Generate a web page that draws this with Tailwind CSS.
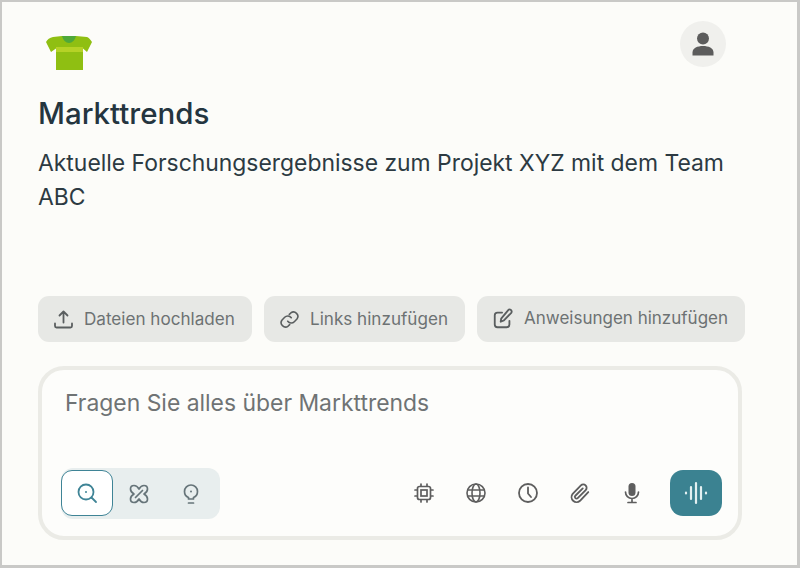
<!DOCTYPE html>
<html lang="de">
<head>
  <meta charset="UTF-8">
  <title>Markttrends</title>
  <script src="https://cdn.jsdelivr.net/npm/@tailwindcss/browser@4"></script>
</head>
<body class="m-0 bg-[#c9c9c7]">
  <div class="w-[800px] h-[568px] overflow-hidden border-t-[2px] border-l-[2px] border-r-[3px] border-b-[3px] border-[#c9c9c7] bg-[#fcfcf9] font-['Inter',sans-serif] pl-[36px] pr-[52px] flex flex-col">
    <!-- top row -->
    <div class="h-[61px] flex justify-between pt-[18px] shrink-0">
      <svg class="ml-[8px] mt-[16px] w-[46px] h-[34px]" viewBox="46 36 46 34">
        <path d="M53 37 L62 36 H76 L87 37 Q89 37.500 92 42 L87 52 L83 48.500 V70 H56 V48.500 L51 52 L46 42 Q48 38 53 37 Z" fill="#8fbf12"/>
        <path d="M56 47 H83 V52 H56 Z" fill="#b5d226"/>
        <path d="M62 36 H76 Q74 43 69 43 Q64 43 62 36 Z" fill="#4ea83a"/>
      </svg>
      <div class="w-[46px] h-[46px] rounded-full bg-[#f0f0ed] flex items-center justify-center mr-[19px] mt-[1px]">
        <svg class="w-[22px] h-[24px]" viewBox="0 0 22 24" fill="#5c5c5c">
          <circle cx="11" cy="6.500" r="6"/>
          <path d="M0.500 23.500 V20.500 C0.500 16 5.500 14 11 14 C16.500 14 21.500 16 21.500 20.500 V23.500 Z"/>
        </svg>
      </div>
    </div>

    <h1 class="mt-[33px] text-[29.500px] leading-[34px] font-medium text-[#24353f] m-0">Markttrends</h1>
    <p class="mt-[16px] w-[700px] text-[22.900px] leading-[34px] text-[#2c3a42]">Aktuelle Forschungsergebnisse zum Projekt XYZ mit dem Team ABC</p>

    <!-- action buttons -->
    <div class="mt-[82px] flex gap-[12px] shrink-0">
      <button class="h-[46px] w-[214px] rounded-[11px] bg-[#e7e8e5] flex items-center pl-[15px] gap-[10px] text-[17.100px] text-[#6d7273]">
        <svg class="w-[21px] h-[21px] shrink-0" viewBox="0 0 21 21" fill="none" stroke="#5a5e5f" stroke-width="1.800" stroke-linecap="round" stroke-linejoin="round"><path d="M10.500 13.500 V2.500 M6.500 6.500 L10.500 2.500 L14.500 6.500 M2 14.500 V17 Q2 18.500 3.500 18.500 H17.500 Q19 18.500 19 17 V14.500"/></svg>
        Dateien hochladen
      </button>
      <button class="h-[46px] w-[201px] rounded-[11px] bg-[#e7e8e5] flex items-center pl-[15px] gap-[10px] text-[17.100px] text-[#6d7273]">
        <svg class="w-[21px] h-[21px] shrink-0" viewBox="0 0 24 24" fill="none" stroke="#5a5e5f" stroke-width="1.800" stroke-linecap="round" stroke-linejoin="round"><path d="M10 14 a5 5 0 0 0 7.500 .5 l3 -3 a5 5 0 0 0 -7 -7 l-1.700 1.700"/><path d="M14 10 a5 5 0 0 0 -7.500 -.5 l-3 3 a5 5 0 0 0 7 7 l1.700 -1.700"/></svg>
        Links hinzufügen
      </button>
      <button class="h-[46px] w-[268px] rounded-[11px] bg-[#e7e8e5] flex items-center pl-[15px] gap-[10px] text-[17px] text-[#6d7273]">
        <svg class="w-[22px] h-[22px] shrink-0" viewBox="0 0 24 24" fill="none" stroke="#5a5e5f" stroke-width="2" stroke-linecap="round" stroke-linejoin="round"><path d="M11 5 H6 a3 3 0 0 0 -3 3 V18 a3 3 0 0 0 3 3 H16 a3 3 0 0 0 3 -3 V14"/><path d="M9.500 15 L10 11.500 L17.500 2.500 a2 2 0 0 1 3.500 2.800 L13 13.500 Z"/></svg>
        Anweisungen hinzufügen
      </button>
    </div>

    <!-- composer -->
    <div class="mt-[24px] w-[704px] h-[174px] shrink-0 rounded-[26px] border-[4px] border-[#ebebe6] bg-[#fdfdfb] pl-[19px] pr-[16px] pt-[18px] flex flex-col justify-between pb-[17px]">
      <div class="pl-[4px] text-[22.900px] leading-[30px] text-[#6f7374]">Fragen Sie alles über Markttrends</div>
      <div class="flex items-center justify-between">
        <div class="w-[159px] h-[51px] rounded-[12px] bg-[#e8eeee] flex items-center">
          <div class="mb-[2px] w-[52px] h-[46px] rounded-[11px] border border-[#3f8496] bg-white flex items-center justify-center">
            <svg class="w-[22px] h-[22px]" viewBox="0 0 22 22" fill="none" stroke="#3f8496" stroke-width="1.800" stroke-linecap="round"><circle cx="10" cy="10" r="7.500"/><circle cx="10" cy="10" r="1" fill="#3f8496" stroke="none"/><path d="M15.500 15.500 L20 20"/></svg>
          </div>
          <div class="w-[52px] flex justify-center">
            <svg class="w-[22px] h-[22px]" viewBox="0 0 22 22" fill="none" stroke="#667479" stroke-width="1.700" stroke-linecap="round" stroke-linejoin="round"><path d="M6 2.500 C9 2.500 11 6 11 6 C11 6 13 2.500 16 2.500 C18.500 2.500 19.500 4.500 19.500 6 C19.500 9 16 11 16 11 C16 11 19.500 13 19.500 16 C19.500 18 18 19.500 16 19.500 C13 19.500 11 16 11 16 C11 16 9 19.500 6 19.500 C4 19.500 2.500 18 2.500 16 C2.500 13 6 11 6 11 C6 11 2.500 9 2.500 6 C2.500 4 4 2.500 6 2.500 Z"/><path d="M7.500 14.500 L14.500 7.500"/></svg>
          </div>
          <div class="w-[52px] flex justify-center">
            <svg class="w-[22px] h-[22px]" viewBox="0 0 22 22" fill="none" stroke="#667479" stroke-width="1.700" stroke-linecap="round" stroke-linejoin="round"><path d="M8.500 16 V14.500 C6 13.500 4.500 11 4.500 8.500 A6.500 6.500 0 0 1 17.500 8.500 C17.500 11 16 13.500 13.500 14.500 V16 Z"/><path d="M8.500 20 H13.500"/><circle cx="11" cy="8.500" r="1" fill="#667479" stroke="none"/></svg>
          </div>
        </div>
        <div class="mb-[2px] flex items-center">
          <div class="w-[52px] flex justify-center">
            <svg class="w-[22px] h-[22px]" viewBox="0 0 22 22" fill="none" stroke="#5e5e5e" stroke-width="1.700" stroke-linecap="round"><rect x="4.500" y="4.500" width="13" height="13" rx="2"/><rect x="8" y="8" width="6" height="6"/><path d="M8 2 V4 M14 2 V4 M8 18 V20 M14 18 V20 M2 8 H4 M2 14 H4 M18 8 H20 M18 14 H20"/></svg>
          </div>
          <div class="w-[52px] flex justify-center">
            <svg class="w-[22px] h-[22px]" viewBox="0 0 22 22" fill="none" stroke="#5e5e5e" stroke-width="1.600"><circle cx="11" cy="11" r="9"/><ellipse cx="11" cy="11" rx="4" ry="9"/><path d="M2.500 8 H19.500 M2.500 14 H19.500"/></svg>
          </div>
          <div class="w-[52px] flex justify-center">
            <svg class="w-[22px] h-[22px]" viewBox="0 0 22 22" fill="none" stroke="#5e5e5e" stroke-width="1.800" stroke-linecap="round" stroke-linejoin="round"><circle cx="11" cy="11" r="9"/><path d="M11 5.500 V11.500 L14 15"/></svg>
          </div>
          <div class="w-[52px] flex justify-center">
            <svg class="w-[22px] h-[22px]" viewBox="0 0 24 24" fill="none" stroke="#5e5e5e" stroke-width="2" stroke-linecap="round" stroke-linejoin="round"><path d="M21 11 L12 20.500 a5.500 5.500 0 0 1 -8 -7.500 L13 3.800 a3.600 3.600 0 0 1 5.200 5 L9.500 17.500 a1.800 1.800 0 0 1 -2.600 -2.500 L15 7"/></svg>
          </div>
          <div class="w-[52px] flex justify-center">
            <svg class="w-[22px] h-[22px]" viewBox="0 0 22 22" fill="none" stroke="#5e5e5e" stroke-width="1.700" stroke-linecap="round"><rect x="7.500" y="1" width="7" height="13" rx="3.500" fill="#5e5e5e" stroke="none"/><path d="M4.500 10 A6.500 6.500 0 0 0 17.500 10 M11 16.500 V20.500 M7 20.500 H15"/></svg>
          </div>
          <div class="ml-[12px] w-[52px] h-[46px] rounded-[13px] bg-[#3b8291] flex items-center justify-center">
            <svg class="w-[24px] h-[24px]" viewBox="0 0 24 24" fill="none" stroke="#e3f0f1" stroke-width="2.200" stroke-linecap="round"><path d="M2 11.500 V12.500 M7 6 V18 M12 2 V22 M17 6 V18 M22 11.500 V12.500"/></svg>
          </div>
        </div>
      </div>
    </div>
  </div>
</body>
</html>
